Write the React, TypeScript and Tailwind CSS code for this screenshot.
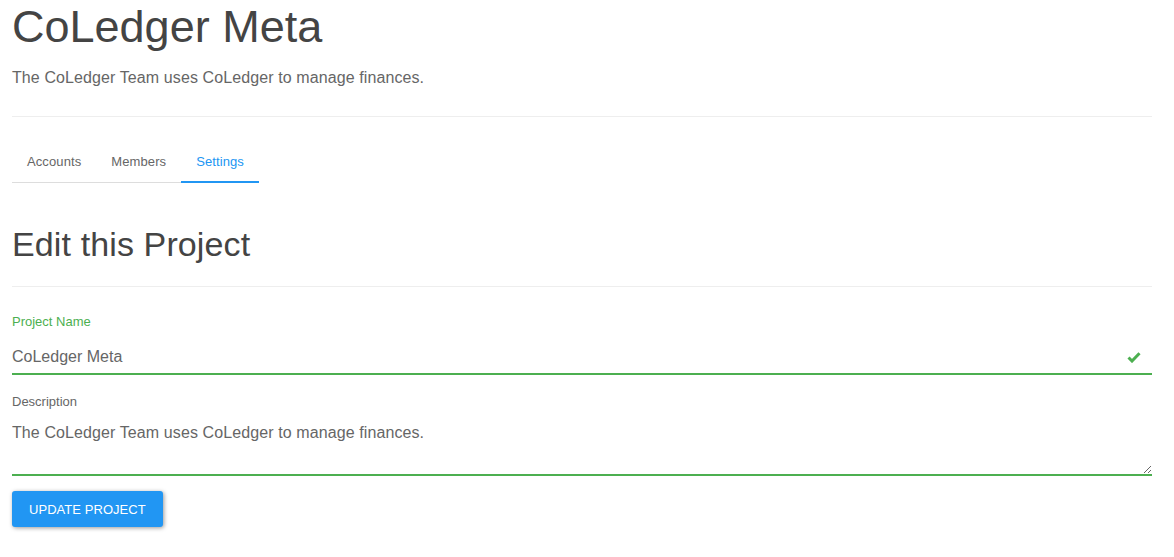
import React from "react";

const tabs = ["Accounts", "Members", "Settings"];

function CheckIcon() {
  return (
    <svg width="14" height="12" viewBox="0 0 14 12" className="absolute right-[11px] top-[11px]">
      <path d="M1.5 6.5 L5 10 L12.5 2.2" fill="none" stroke="#4caf50" strokeWidth="3" strokeLinecap="butt" strokeLinejoin="miter" />
    </svg>
  );
}

export default function App() {
  return (
    <div className="min-h-[557px] bg-white font-['Liberation_Sans',Arial,sans-serif]">
      <div className="w-[1152px] pl-[12px]">
        <h1 className="mt-[2px] text-[45px] leading-[50px] text-[#444]">CoLedger Meta</h1>
        <p className="mt-[14px] text-[16px] leading-[24px] tracking-[0.1px] text-[#666]">
          The CoLedger Team uses CoLedger to manage finances.
        </p>
        <hr className="mt-[26px] border-t border-[#eee]" />

        <div className="mt-[24px] inline-flex border-b border-[#ddd]">
          {tabs.map((t) => (
            <div
              key={t}
              className={
                t === "Settings"
                  ? "-mb-px border-b-2 border-[#2196f3] px-[15px] pt-[11px] pb-[9px] text-[13px] leading-[20px] tracking-[0.1px] text-[#2196f3]"
                  : "-mb-px border-b-2 border-transparent px-[15px] pt-[11px] pb-[9px] text-[13px] leading-[20px] tracking-[0.1px] text-[#666]"
              }
            >
              {t}
            </div>
          ))}
        </div>

        <h2 className="mt-[43px] text-[34px] leading-[37px] tracking-[0.12px] text-[#444]">Edit this Project</h2>
        <hr className="mt-[23px] border-t border-[#eee]" />

        <label className="mt-[25px] block text-[13px] leading-[20px] text-[#4caf50]">Project Name</label>
        <div className="relative mt-[8px]">
          <input
            readOnly
            defaultValue="CoLedger Meta"
            className="block h-[35px] w-full border-0 border-b-2 border-[#4caf50] bg-transparent p-0 text-[16px] leading-[24px] text-[#666] outline-none"
          />
          <CheckIcon />
        </div>

        <label className="mt-[17px] block text-[13px] leading-[20px] text-[#666]">Description</label>
        <textarea
          readOnly
          defaultValue="The CoLedger Team uses CoLedger to manage finances."
          className="mt-[9px] block h-[55px] w-full border-0 border-b-2 border-[#4caf50] bg-transparent p-0 text-[16px] leading-[24px] tracking-[0.1px] text-[#666] outline-none"
        />

        <button className="mt-[15px] h-[36px] rounded-[3px] bg-[#2196f3] px-[17px] pt-px text-[13px] uppercase tracking-[0.05px] text-white shadow-[1px_1px_4px_rgba(0,0,0,0.4)]">
          Update Project
        </button>
      </div>
    </div>
  );
}
